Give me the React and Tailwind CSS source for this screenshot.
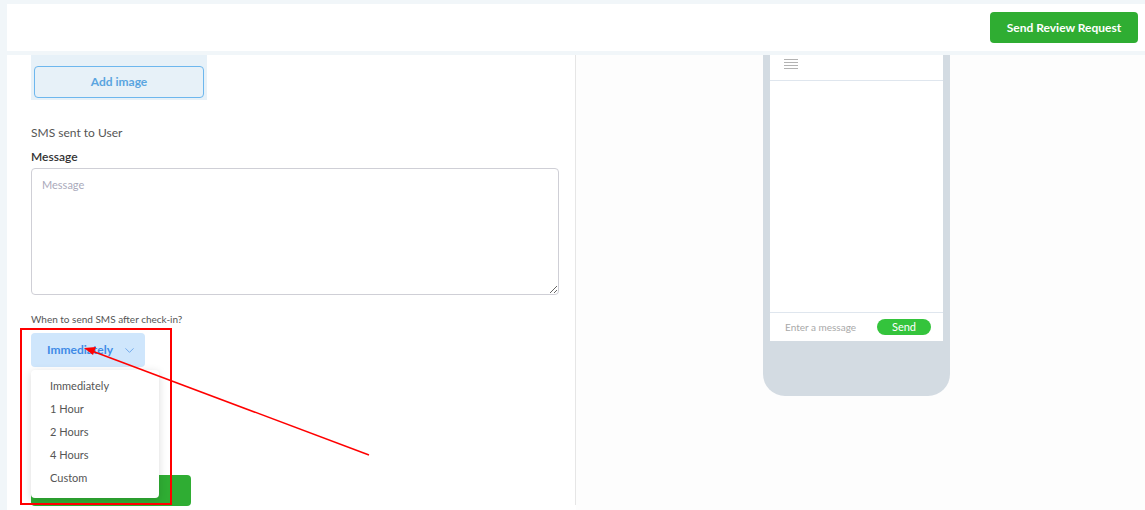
import { ChevronDown } from 'lucide-react';

const options = ['Immediately', '1 Hour', '2 Hours', '4 Hours', 'Custom'];

function PhonePreview() {
  return (
    <div className="w-[187px] bg-[#d3dbe2] rounded-b-[22px] px-[7px] pb-[55px]">
      <div className="bg-white">
        <div className="h-[25px] px-[14px] pt-[4px]">
          <div className="w-[14px] flex flex-col gap-[2px]">
            <span className="h-[1px] bg-[#b3b3b3]" />
            <span className="h-[1px] bg-[#b3b3b3]" />
            <span className="h-[1px] bg-[#b3b3b3]" />
            <span className="h-[1px] bg-[#b3b3b3]" />
          </div>
        </div>
        <div className="h-[233px] border-t border-b border-[#dfe6ee]" />
        <div className="h-[28px] flex items-center justify-between pl-[15px] pr-[12px]">
          <span className="text-[10px] text-[#a9a9a9]">Enter a message</span>
          <span className="w-[54px] h-[16px] rounded-full bg-[#34c43c] text-white text-[11px] leading-[16px] text-center">Send</span>
        </div>
      </div>
    </div>
  );
}

export default function App() {
  return (
    <div className="relative w-[1145px] h-[510px] overflow-hidden bg-[#f1f6f9] pl-[7px] pt-[4px] font-['Lato',sans-serif]">
      {/* Header */}
      <div className="h-[47px] bg-white flex items-center justify-end pr-[7px]">
        <button className="h-[31px] w-[148px] rounded-[4px] bg-[#2fad32] text-white text-[12px] font-bold">
          Send Review Request
        </button>
      </div>

      <div className="mt-[4px] flex bg-white h-[455px]">
        {/* Left column */}
        <div className="w-[569px] h-[450px] border-r border-[#e6e6e6] pl-[24px] pr-[17px]">
          <div className="w-[176px] h-[45px] bg-[#e7f1f8] pt-[11px] px-[3px]">
            <div className="h-[32px] rounded-[4px] border border-[#6db7ee] bg-[#e7f1f8] text-[#5aa5e0] text-[12px] font-bold flex items-center justify-center">
              Add image
            </div>
          </div>

          <div className="mt-[25px] text-[12px] text-[#555] leading-[16px]">SMS sent to User</div>
          <div className="mt-[8px] text-[12px] text-[#333] font-semibold leading-[16px]">Message</div>
          <textarea
            placeholder="Message"
            className="mt-[3px] block w-[528px] h-[127px] rounded-[4px] border border-[#cfcfd6] px-[10px] py-[8px] text-[11px] placeholder:text-[#aab] outline-none"
          />

          <div className="mt-[17px] text-[10px] text-[#555] leading-[14px]">When to send SMS after check-in?</div>

          <div className="relative mt-[7px]">
            <div className="w-[114px] h-[34px] rounded-[4px] bg-[#cfe6fc] text-[#3f8be6] text-[12px] font-bold flex items-center pl-[16px] gap-[9px]">
              Immediately
              <ChevronDown size={15} strokeWidth={1.3} className="text-[#5b9be6]" />
            </div>
            <button className="mt-[108px] w-[160px] h-[31px] rounded-[4px] bg-[#2fad33]" />
            {/* Open dropdown menu */}
            <div className="absolute left-0 top-[37px] w-[128px] h-[128px] bg-white rounded-[4px] shadow-[0_2px_8px_rgba(0,0,0,0.15)] pt-[5px]">
              {options.map((o) => (
                <div key={o} className="h-[23px] flex items-center pl-[19px] text-[11px] text-[#555]">{o}</div>
              ))}
            </div>
          </div>
        </div>

        {/* Right column */}
        <div className="flex-1 bg-[#fdfdfd] pl-[187px]">
          <PhonePreview />
        </div>
      </div>

      {/* Annotation overlay */}
      <div className="absolute left-[20px] top-[328px] w-[152px] h-[177px] border-2 border-[#ff0000] pointer-events-none" />
      <svg className="absolute left-0 top-0 pointer-events-none" width="1145" height="510">
        <line x1="369" y1="455" x2="92" y2="351" stroke="#ff0000" strokeWidth="1.5" />
        <polygon points="84,348 96,347 93,355" fill="#ff0000" />
      </svg>
    </div>
  );
}
